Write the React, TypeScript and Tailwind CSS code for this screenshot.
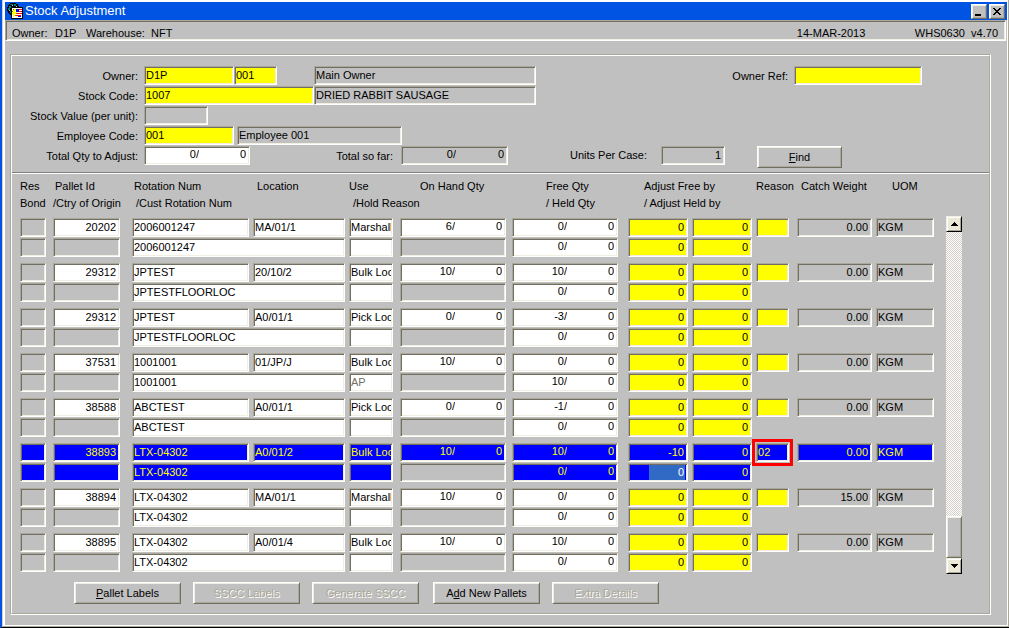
import React, { useState } from "react";
import clsx from "clsx";

const BEVEL =
  "border border-t-[#aca899] border-l-[#aca899] border-r-white border-b-white shadow-[inset_1px_1px_0_#716f64,inset_-1px_-1px_0_#f1efe2]";
const RAISED =
  "border border-t-white border-l-white border-r-[#716f64] border-b-[#716f64] shadow-[inset_1px_1px_0_#f1efe2,inset_-1px_-1px_0_#aca899]";

type Tone = "white" | "grey" | "yellow" | "blue" | "muted";

const TONES: Record<Tone, string> = {
  white: "bg-white text-black",
  grey: "bg-[#c0c0c0] text-black",
  yellow: "bg-[#ffff00] text-black",
  blue: "bg-[#0000ff] text-[#ffff00]",
  muted: "bg-white text-[#716f64]",
};

interface FieldProps {
  label?: string;
  id?: string;
  value?: string;
  tone?: Tone;
  right?: boolean;
  className?: string;
}

function Field({ label, id, value = "", tone = "white", right, className }: FieldProps) {
  const [text, setText] = useState(value);
  return (
    <input
      id={id}
      type="text"
      aria-label={label}
      value={text}
      readOnly={tone === "grey"}
      onChange={(e) => setText(e.target.value)}
      className={clsx(
        "block h-[19px] min-w-0 rounded-none pb-0.5 pl-px leading-[15px] outline-none",
        BEVEL,
        TONES[tone],
        right ? "pr-[3px] text-right" : "pr-px",
        className ?? "w-full"
      )}
    />
  );
}

interface QtyProps {
  id?: string;
  label: string;
  cases: string;
  units: string;
  tone?: Tone;
  className?: string;
}

function QtyField({ id, label, cases, units, tone = "white", className = "w-full" }: QtyProps) {
  const inner = "min-w-0 bg-transparent pb-0.5 text-right leading-[15px] outline-none";
  return (
    <div className={clsx("flex h-[19px] pr-[3px]", BEVEL, TONES[tone], className)}>
      <input
        id={id}
        type="text"
        aria-label={`${label} cases`}
        defaultValue={`${cases}/`}
        className={clsx(inner, "w-[54px]")}
      />
      <input type="text" aria-label={`${label} units`} defaultValue={units} className={clsx(inner, "flex-1")} />
    </div>
  );
}

interface ButtonProps {
  before?: string;
  hot?: string;
  after: string;
  disabled?: boolean;
  className: string;
}

function PushButton({ before, hot, after, disabled, className }: ButtonProps) {
  return (
    <button
      type="button"
      disabled={disabled}
      className={clsx(
        "h-[22px] bg-[#c0c0c0] text-center",
        RAISED,
        disabled ? "text-[#aca899] [text-shadow:1px_1px_0_#fff]" : "text-black",
        className
      )}
    >
      {before}
      {hot && <span className="underline">{hot}</span>}
      {after}
    </button>
  );
}

interface Stock {
  pallet: string;
  rotation: string;
  cust: string;
  location: string;
  use: string;
  hold?: string;
  onHand: string;
  free: string;
  held: string;
  adjust: string;
  reason?: string;
  weight: string;
  selected?: boolean;
}

const STOCK: Stock[] = [
  { pallet: "20202", rotation: "2006001247", cust: "2006001247", location: "MA/01/1", use: "Marshall", onHand: "6", free: "0", held: "0", adjust: "0", weight: "0.00" },
  { pallet: "29312", rotation: "JPTEST", cust: "JPTESTFLOORLOC", location: "20/10/2", use: "Bulk Loc", onHand: "10", free: "10", held: "0", adjust: "0", weight: "0.00" },
  { pallet: "29312", rotation: "JPTEST", cust: "JPTESTFLOORLOC", location: "A0/01/1", use: "Pick Loc", onHand: "0", free: "-3", held: "0", adjust: "0", weight: "0.00" },
  { pallet: "37531", rotation: "1001001", cust: "1001001", location: "01/JP/J", use: "Bulk Loc", hold: "AP", onHand: "10", free: "0", held: "10", adjust: "0", weight: "0.00" },
  { pallet: "38588", rotation: "ABCTEST", cust: "ABCTEST", location: "A0/01/1", use: "Pick Loc", onHand: "0", free: "-1", held: "0", adjust: "0", weight: "0.00" },
  { pallet: "38893", rotation: "LTX-04302", cust: "LTX-04302", location: "A0/01/2", use: "Bulk Loc", onHand: "10", free: "10", held: "0", adjust: "-10", reason: "02", weight: "0.00", selected: true },
  { pallet: "38894", rotation: "LTX-04302", cust: "LTX-04302", location: "MA/01/1", use: "Marshall", onHand: "10", free: "0", held: "0", adjust: "0", weight: "15.00" },
  { pallet: "38895", rotation: "LTX-04302", cust: "LTX-04302", location: "A0/01/4", use: "Bulk Loc", onHand: "10", free: "10", held: "0", adjust: "0", weight: "0.00" },
];

function StockRows({ row }: { row: Stock }) {
  const sel = row.selected;
  const white: Tone = sel ? "blue" : "white";
  const grey: Tone = sel ? "blue" : "grey";
  const yellow: Tone = sel ? "blue" : "yellow";
  return (
    <tbody className="align-top">
      <tr className="h-5">
        <td className="pr-[7px]"><Field label="Reserved" tone={grey} /></td>
        <td className="pr-3"><Field label="Pallet id" value={row.pallet} tone={white} right /></td>
        <td className="pr-1"><Field label="Rotation number" value={row.rotation} tone={white} /></td>
        <td className="pr-1"><Field label="Location" value={row.location} tone={white} /></td>
        <td className="pr-[7px]"><Field label="Use" value={row.use} tone={white} /></td>
        <td className="pr-1.5"><QtyField label="On hand" cases={row.onHand} units="0" tone={white} /></td>
        <td className="pr-2.5"><QtyField label="Free" cases={row.free} units="0" tone={white} /></td>
        <td className="pr-1"><Field label="Adjust free cases" value={row.adjust} tone={yellow} right /></td>
        <td className="pr-1"><Field label="Adjust free units" value="0" tone={yellow} right /></td>
        <td className="relative pr-2">
          <Field label="Reason" value={row.reason} tone={yellow} />
          {sel && <div className="pointer-events-none absolute -top-1 right-1 -left-1 h-[27px] border-3 border-[#ff0000]" />}
        </td>
        <td className="pr-1"><Field label="Catch weight" value={row.weight} tone={grey} right /></td>
        <td><Field label="Unit of measure" value="KGM" tone={grey} /></td>
      </tr>
      <tr className="h-[25px]">
        <td className="pr-[7px]"><Field label="Bond" tone={grey} /></td>
        <td className="pr-3"><Field label="Country of origin" tone={grey} /></td>
        <td className="pr-1" colSpan={2}><Field label="Customer rotation number" value={row.cust} tone={white} /></td>
        <td className="pr-[7px]"><Field label="Hold reason" value={row.hold} tone={row.hold ? "muted" : white} /></td>
        <td className="pr-1.5"><Field label="Spare" tone="grey" /></td>
        <td className="pr-2.5"><QtyField label="Held" cases={row.held} units="0" tone={white} /></td>
        <td className="pr-1">
          {sel ? (
            <div className={clsx("flex h-[19px] py-px pr-0.5 pl-5", BEVEL, TONES.blue)}>
              <input
                type="text"
                aria-label="Adjust held cases"
                defaultValue="0"
                className="w-full min-w-0 bg-[#316ac5] pr-px pb-px text-right leading-[15px] text-white outline-none"
              />
            </div>
          ) : (
            <Field label="Adjust held cases" value="0" tone="yellow" right />
          )}
        </td>
        <td className="pr-1"><Field label="Adjust held units" value="0" tone={yellow} right /></td>
        <td colSpan={3} />
      </tr>
    </tbody>
  );
}

function AppIcon() {
  return (
    <svg width="16" height="16" viewBox="0 0 16 16" shapeRendering="crispEdges" aria-hidden="true">
      <path d="M3 0h6v1h2v2h1v2H5v7H3v-1H2v-1H1V8H0V4h1V2h1V1h1z" fill="#000" />
      <path d="M3 1h3v1H3zM7 1h2v2H7zM2 3h2v2H2zM1 5h2v2H1zM3 8h1v2H3z" fill="#008080" />
      <path d="M5 2h1v1H5zM9 3h1v1H9zM2 7h1v1H2z" fill="#c0c0c0" />
      <path d="M4 4h12v12H4z" fill="#000" />
      <path d="M5 5h10v10H5z" fill="#fff" />
      <path d="M12 6h3v1h-3zM12 8h3v1h-3zM10 10h5v1h-5zM9 12h5v1H9z" fill="#f00" />
      <path d="M9 6h3v3H9zM11 13h3v1h-3z" fill="#00f" />
      <path d="M7 6h2v2H8v1h2v1H9v1H8v2H7v1H6v-3H5V9h1V7h1z" fill="#ff0" />
      <path d="M6 6h1v1H6zM5 8h1v1H5zM9 10h1v1H9zM8 12h1v1H8z" fill="#808000" />
    </svg>
  );
}

const WINDOW_BUTTON = "flex h-[15px] w-4 items-center justify-center bg-[#c0c0c0]";
const SCROLL_BUTTON =
  "flex h-4 w-4 items-center justify-center border border-t-[#f1efe2] border-l-[#f1efe2] border-r-black border-b-black bg-[#ece9d8] shadow-[inset_1px_1px_0_#fff,inset_-1px_-1px_0_#aca899]";
const LABEL = "w-[126px] text-right leading-[21px]";
const HEAD = "text-left font-normal whitespace-nowrap";

export default function App() {
  return (
    <div className="flex min-h-screen flex-col border-b border-l-2 border-b-black border-l-[#0054e3] bg-[#c0c0c0] font-['Liberation_Sans',Arial,sans-serif] text-[11px] leading-[17px] text-black">
      <div className="flex flex-1 flex-col border-r border-b border-l border-r-[#aca899] border-b-[#aca899] border-l-[#d4d0c8]">
        <div className="flex flex-1 flex-col border-t-2 border-r border-b border-l-2 border-white">
          <header className="flex h-[18px] items-center bg-[#0054e3] pr-0.5 pl-0.5">
            <AppIcon />
            <h1 className="ml-0.5 flex-1 text-[13px] leading-[18px] text-white">Stock Adjustment</h1>
            <div className="flex gap-0.5">
              <button type="button" aria-label="Minimise" className={clsx(WINDOW_BUTTON, RAISED)}>
                <svg width="14" height="13" viewBox="0 0 14 13" shapeRendering="crispEdges">
                  <path d="M3 9h6v2H3z" fill="#000" />
                </svg>
              </button>
              <button type="button" aria-label="Close" className={clsx(WINDOW_BUTTON, RAISED)}>
                <svg width="14" height="13" viewBox="0 0 14 13" shapeRendering="crispEdges">
                  <path d="M3 3h2v1h1v1h2V4h1V3h2v1h-1v1H9v1H8v1h1v1h1v1h1v1H9V9H8V8H6v1H5v1H3V9h1V8h1V7h1V6H5V5H4V4H3z" fill="#000" />
                </svg>
              </button>
            </div>
          </header>

          <div className={clsx("mr-px flex h-[21px] items-end pr-[7px] pl-1.5 leading-[13px]", BEVEL)}>
            <span className="w-[43px]">Owner:</span>
            <span className="w-[31px]">D1P</span>
            <span className="w-[65px]">Warehouse:</span>
            <span className="flex-1">NFT</span>
            <span className="w-[118px]">14-MAR-2013</span>
            <span>WHS0630&nbsp; v4.70</span>
          </div>

          <main className="mt-[13px] mr-4 mb-2.5 ml-[5px] border border-t-[#aca899] border-l-[#aca899] border-r-white border-b-white">
            <div className="border border-t-white border-l-white border-r-[#aca899] border-b-[#aca899]">
              <form className="flex h-[117px] flex-col gap-px border-b border-[#808080] pt-2.5" onSubmit={(e) => e.preventDefault()}>
                <div className="flex">
                  <label htmlFor="owner" className={LABEL}>Owner:</label>
                  <Field id="owner" value="D1P" tone="yellow" className="ml-1.5 w-[90px]" />
                  <Field label="Owner site" value="001" tone="yellow" className="w-[43px]" />
                  <Field label="Owner name" value="Main Owner" tone="grey" className="ml-[37px] w-[222px]" />
                  <label htmlFor="ownerRef" className="ml-auto leading-[21px]">Owner Ref:</label>
                  <Field id="ownerRef" tone="yellow" className="mr-[67px] ml-1.5 w-[128px]" />
                </div>
                <div className="-mt-0.5 flex">
                  <label htmlFor="stock" className={LABEL}>Stock Code:</label>
                  <Field id="stock" value="1007" tone="yellow" className="ml-1.5 w-[170px]" />
                  <Field label="Stock name" value="DRIED RABBIT SAUSAGE" tone="grey" className="w-[222px]" />
                </div>
                <div className="-mt-0.5 flex">
                  <label htmlFor="unitValue" className={LABEL}>Stock Value (per unit):</label>
                  <Field id="unitValue" tone="grey" className="ml-1.5 w-16" />
                </div>
                <div className="-mt-0.5 flex">
                  <label htmlFor="employee" className={LABEL}>Employee Code:</label>
                  <Field id="employee" value="001" tone="yellow" className="ml-1.5 w-[90px]" />
                  <Field label="Employee name" value="Employee 001" tone="grey" className="ml-[3px] w-[165px]" />
                </div>
                <div className="-mt-0.5 flex">
                  <label htmlFor="total" className={LABEL}>Total Qty to Adjust:</label>
                  <QtyField id="total" label="Total to adjust" cases="0" units="0" className="ml-1.5 w-[106px]" />
                  <label htmlFor="soFar" className="w-[143px] text-right leading-[21px]">Total so far:</label>
                  <QtyField id="soFar" label="Total so far" cases="0" units="0" tone="grey" className="ml-2 w-[107px]" />
                  <label htmlFor="perCase" className="ml-[62px] w-[91px] leading-[19px]">Units Per Case:</label>
                  <Field id="perCase" value="1" tone="grey" right className="w-16" />
                  <PushButton hot="F" after="ind" className="ml-8 w-[85px]" />
                </div>
              </form>

              <div className="border-t border-white pt-1 pl-2">
                <div className="flex gap-3 pr-[27px]">
                  <table className="w-full table-fixed border-collapse">
                    <colgroup>
                      <col className="w-[33px]" />
                      <col className="w-[79px]" />
                      <col className="w-[121px]" />
                      <col className="w-[96px]" />
                      <col className="w-[51px]" />
                      <col className="w-[112px]" />
                      <col className="w-[116px]" />
                      <col className="w-[64px]" />
                      <col className="w-[64px]" />
                      <col className="w-[41px]" />
                      <col className="w-[79px]" />
                      <col className="w-[58px]" />
                    </colgroup>
                    <thead className="align-top">
                      <tr className="h-[17px]">
                        <th className={HEAD}>Res</th>
                        <th className={clsx(HEAD, "pl-0.5")}>Pallet Id</th>
                        <th className={clsx(HEAD, "pl-0.5")}>Rotation Num</th>
                        <th className={clsx(HEAD, "pl-1")}>Location</th>
                        <th className={HEAD}>Use</th>
                        <th className={clsx(HEAD, "pl-5")}>On Hand Qty</th>
                        <th className={clsx(HEAD, "pl-[34px]")}>Free Qty</th>
                        <th className={clsx(HEAD, "pl-4")} colSpan={2}>Adjust Free by</th>
                        <th className={HEAD}>Reason</th>
                        <th className={clsx(HEAD, "pl-1")}>Catch Weight</th>
                        <th className={clsx(HEAD, "pl-4")}>UOM</th>
                      </tr>
                      <tr className="h-[23px]">
                        <th className={HEAD}>Bond</th>
                        <th className={HEAD}>/Ctry of Origin</th>
                        <th className={clsx(HEAD, "pl-1")} colSpan={2}>/Cust Rotation Num</th>
                        <th className={clsx(HEAD, "pl-1")} colSpan={2}>/Hold Reason</th>
                        <th className={clsx(HEAD, "pl-[34px]")}>/ Held Qty</th>
                        <th className={clsx(HEAD, "pl-4")} colSpan={5}>/ Adjust Held by</th>
                      </tr>
                    </thead>
                    {STOCK.map((row) => (
                      <StockRows key={row.pallet + row.location} row={row} />
                    ))}
                  </table>

                  <div className="mt-[38px] mb-1 flex w-4 shrink-0 flex-col bg-[conic-gradient(#fff_25%,#d4d0c8_0_50%,#fff_0_75%,#d4d0c8_0)] bg-size-[2px_2px]">
                    <button type="button" aria-label="Scroll up" className={SCROLL_BUTTON}>
                      <svg width="7" height="4" viewBox="0 0 7 4" shapeRendering="crispEdges">
                        <path d="M3 0h1v1h1v1h1v1h1v1H0V3h1V2h1V1h1z" fill="#000" />
                      </svg>
                    </button>
                    <div className={clsx("mt-auto h-[42px] bg-[#c0c0c0]", RAISED)} />
                    <button type="button" aria-label="Scroll down" className={SCROLL_BUTTON}>
                      <svg width="7" height="4" viewBox="0 0 7 4" shapeRendering="crispEdges">
                        <path d="M0 0h7v1H6v1H5v1H4v1H3V3H2V2H1V1H0z" fill="#000" />
                      </svg>
                    </button>
                  </div>
                </div>

                <div className="mt-1 mb-[9px] ml-[54px] flex gap-3.5">
                  <div className="flex gap-3">
                    <PushButton hot="P" after="allet Labels" className="w-[107px]" />
                    <PushButton after="SSCC Labels" disabled className="w-[107px]" />
                    <PushButton after="Generate SSCC" disabled className="w-[107px]" />
                  </div>
                  <div className="flex gap-3">
                    <PushButton before="A" hot="d" after="d New Pallets" className="w-[107px]" />
                    <PushButton after="Extra Details" disabled className="w-[107px]" />
                  </div>
                </div>
              </div>
            </div>
          </main>
        </div>
      </div>
    </div>
  );
}
